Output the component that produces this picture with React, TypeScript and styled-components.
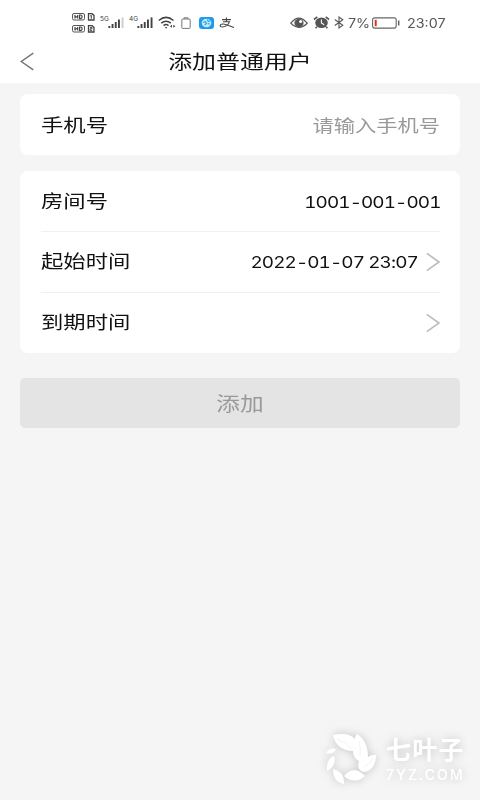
import type { ReactNode } from "react";
import styled, { createGlobalStyle } from "styled-components";

const GlobalStyle = createGlobalStyle`
  * {
    box-sizing: border-box;
  }
  body {
    margin: 0;
    background: #f5f5f5;
    font-family: Inter, "Noto Sans CJK SC", sans-serif;
    color: #111;
  }
`;

const Screen = styled.div`
  display: flex;
  flex-direction: column;
  height: 800px;
  overflow: hidden;
  background: #f5f5f5;
`;

const StatusBar = styled.div`
  display: flex;
  align-items: center;
  justify-content: space-between;
  height: 45px;
  padding: 0 34px 0 72px;
  background: #fff;
`;

const StatusGroup = styled.div`
  display: flex;
  align-items: center;
  height: 45px;
`;

const StatusIcon = styled.svg<{ $gap?: number }>`
  display: block;
  flex: none;
  margin-left: ${({ $gap }) => $gap ?? 0}px;
`;

const StatusText = styled.span<{ $gap: number; $width: number }>`
  width: ${({ $width }) => $width}px;
  margin-left: ${({ $gap }) => $gap}px;
  font-size: 13px;
  line-height: 20px;
  color: #555;
  white-space: nowrap;
  transform: scaleX(1.1);
  transform-origin: left;
`;

const Header = styled.header`
  display: grid;
  grid-template-columns: 60px 1fr 60px;
  align-items: center;
  height: 38px;
  padding-bottom: 6px;
  background: #fff;
`;

const BackButton = styled.button`
  display: flex;
  padding: 0 0 0 20px;
  border: 0;
  background: none;
`;

const Title = styled.h1`
  margin: 0;
  padding-top: 3px;
  font-size: 19px;
  font-weight: 400;
  line-height: 28px;
  text-align: center;
  transform: scaleX(1.26);
`;

const Form = styled.main`
  display: flex;
  flex-direction: column;
  padding: 11px 20px 0;
`;

const Card = styled.section`
  margin-bottom: 16px;
  padding: 0 20px 0 21px;
  border-radius: 8px;
  background: #fff;
`;

const Row = styled.div`
  display: flex;
  align-items: center;
  height: 61px;
  padding-top: 2px;

  & + & {
    padding-top: 0;
    border-top: 1px solid #f1f1f1;
  }

  &:first-child:not(:last-child) {
    height: 60px;
  }
`;

const Label = styled.span`
  font-size: 18px;
  line-height: 26px;
  transform: scaleX(1.24);
  transform-origin: left;
`;

const Value = styled.span<{ $muted?: boolean }>`
  margin-left: auto;
  font-size: ${({ $muted }) => ($muted ? 17 : 16)}px;
  font-variant-numeric: tabular-nums;
  letter-spacing: ${({ $muted }) => ($muted ? 0 : -0.75)}px;
  line-height: 26px;
  color: ${({ $muted }) => ($muted ? "#999" : "#111")};
  transform: scaleX(${({ $muted }) => ($muted ? 1.25 : 1.18)});
  transform-origin: right;
`;

const Chevron = styled.svg`
  flex: none;
  margin-left: 8px;
`;

const SubmitButton = styled.button`
  height: 50px;
  margin-top: 9px;
  padding: 0 0 1px;
  border: 0;
  border-radius: 5px;
  background: #e4e4e4;
  color: #999;
  font-family: inherit;
  font-size: 19px;
`;

const SubmitText = styled.span`
  display: inline-block;
  transform: scaleX(1.25);
`;

const Watermark = styled.div`
  display: flex;
  align-items: center;
  gap: 8px;
  width: 154px;
  height: 62px;
  margin: auto 0 10px auto;
  color: #fff;
  filter: drop-shadow(0 0 5px rgba(0, 0, 0, 0.2));
`;

const WatermarkText = styled.div`
  display: flex;
  flex-direction: column;
`;

const WatermarkName = styled.span`
  font-size: 25px;
  font-weight: 700;
  line-height: 30px;
  letter-spacing: 1.2px;
`;

const WatermarkSite = styled.span`
  font-size: 14px;
  font-weight: 500;
  line-height: 19px;
  letter-spacing: 2.1px;
`;

const SimIcon = () => (
  <StatusIcon width="23" height="20" viewBox="0 0 23 20" fill="none" stroke="#444">
    {[0, 12].map((y, i) => (
      <g key={y} transform={`translate(0 ${y})`}>
        <rect x=".5" y=".5" width="12" height="6.5" rx="1.5" strokeWidth=".9" />
        <path d="M3 2v3.6M5.7 2v3.6M3 3.8h2.7M7.6 2v3.6h1c2 0 2-3.6 0-3.6z" strokeWidth="1.2" />
        <path d="M16.5 .7h3.6L22 2.4V7h-5.5z" strokeWidth="1.3" />
        <path
          d={i === 0 ? "M18.2 3l1.1-.7v3.4" : "M18 2.6h2v1.2h-1.8v1.6h2"}
          strokeWidth="1"
        />
      </g>
    ))}
  </StatusIcon>
);

const SignalIcon = ({ label, gap, weak }: { label: string; gap: number; weak?: boolean }) => (
  <StatusIcon $gap={gap} width="25" height="14" viewBox="0 0 25 14" fill="#444">
    <text x="0" y="5" fontSize="6.5" fontFamily="Inter, sans-serif">{label}</text>
    <path d="M8.4 10h1.9v2H8.4zM11.6 8h1.9v4h-1.9zM14.8 6h1.9v6h-1.9zM18 3.6h1.9V12H18z" />
    <path d="M21.6 1.4h1.9V12h-1.9z" fill={weak ? "#ccc" : "#444"} />
  </StatusIcon>
);

const WifiIcon = () => (
  <StatusIcon $gap={4} width="18" height="13" viewBox="0 0 18 13" fill="none" stroke="#444" strokeWidth="1.5">
    <path d="M.8 4.5Q8 -1.7 15.5 4.5M3.2 7.2q4.8-4 9.7 0M5.5 9.6q2.6-2 5 0" />
    <path d="M6.8 11h2.6l-1.3 1.7z" fill="#444" stroke="none" />
    <path d="M14 8.8l-2 1.5 2 1.5zM15.3 8.8l2 1.5-2 1.5z" fill="#444" stroke="none" />
  </StatusIcon>
);

const SmallBatteryIcon = () => (
  <StatusIcon $gap={5} width="10" height="12" viewBox="0 0 10 12" fill="none" stroke="#777">
    <path d="M3 2V.8h4V2M1.8 2h6.4q1 0 1 1v7.4q0 1-1 1H1.8q-1 0-1-1V3q0-1 1-1z" />
  </StatusIcon>
);

const AppIcon = () => (
  <StatusIcon $gap={8} width="15" height="12" viewBox="0 0 15 12">
    <rect width="15" height="12" rx="3" fill="#209be8" />
    <ellipse cx="7.5" cy="6" rx="4.8" ry="4.2" fill="#c4ecff" />
    <path d="M4 5.4l2.4-.8 1 1.6-1.6 2M8.2 2.6l1 1.8 2-.4M8.6 7l2-.4" fill="none" stroke="#209be8" strokeWidth="1.1" />
  </StatusIcon>
);

const PayIcon = () => (
  <StatusIcon $gap={5} width="16" height="12" viewBox="0 0 16 12" fill="none" stroke="#444" strokeWidth="1.1">
    <path d="M3 2.6h9M7.4 .6v4M4 4.7h6.5Q9 9.4 3.7 10C.2 10.3 .3 6.8 4.4 7 7.6 7.3 11 9 15 10.4" />
  </StatusIcon>
);

const EyeIcon = () => (
  <StatusIcon width="18" height="12" viewBox="0 0 18 12" fill="none" stroke="#555" strokeWidth="1.2">
    <path d="M.8 6.2Q8.8-3.8 17.2 6.2 8.8 14.5.8 6.2z" />
    <ellipse cx="9" cy="6" rx="4" ry="3.6" fill="#555" />
    <circle cx="10.6" cy="4.4" r="1.5" fill="#fff" stroke="none" />
  </StatusIcon>
);

const AlarmIcon = () => (
  <StatusIcon $gap={5} width="17" height="13" viewBox="0 0 17 13">
    <ellipse cx="8.5" cy="6.7" rx="6.3" ry="5.2" fill="#555" />
    <path d="M1 3.5L4.3.9M16 3.5L12.7.9M3.8 10.8L2.6 12.3M13.2 10.8l1.2 1.5" stroke="#555" strokeWidth="1.6" />
    <path d="M8.4 3.5V7l2.8 1.7" fill="none" stroke="#fff" strokeWidth="1.1" />
  </StatusIcon>
);

const BluetoothIcon = () => (
  <StatusIcon $gap={4} width="10" height="13" viewBox="0 0 10 13" fill="none" stroke="#555" strokeWidth="1.1">
    <path d="M.8 3.5l8 5.8L5 12V1l3.8 2.7-8 5.8" />
  </StatusIcon>
);

const BatteryIcon = () => (
  <StatusIcon $gap={4} width="28" height="12" viewBox="0 0 28 12" fill="none" stroke="#666">
    <rect x=".6" y=".9" width="23.6" height="10.2" rx="2" strokeWidth="1.1" />
    <path d="M26.7 3.5v5" strokeWidth="1.5" />
    <path d="M3.7 2.8v6.4" stroke="#dc2f27" strokeWidth="2" />
  </StatusIcon>
);

const LeafLogo = () => (
  <svg width="52" height="52" viewBox="0 0 52 52" fill="#fff">
    <path d="M7 2c10-2 18-1 22 4 0-2 1-4 2-5 7 4 11 12 11 23 3-2 6-2 8-2 0 9-4 16-12 17-5-1-7-5-5-11-4-2-6-6-6-10C18 18 9 13 7 2z" />
    <path d="M0 20q3-6 10-4-3 6-10 4zM1 38q-1-12 7-15 3 10-7 15zM7 36q12 3 11 15Q7 49 7 36zM18 43q10-12 21 0-10 9-21 0z" />
    <path d="M11 6q9 3 15 10M33 8q2 7 1 15M38 34q6-3 9-9" fill="none" stroke="#ececec" strokeWidth=".7" />
  </svg>
);

const RightArrow = () => (
  <Chevron width="14" height="20" viewBox="0 0 14 20" fill="none" stroke="#bbb" strokeWidth="1.6">
    <path d="M.8 1.3L13 10 .8 18.7" />
  </Chevron>
);

interface FieldProps {
  label: string;
  children?: ReactNode;
  muted?: boolean;
  arrow?: boolean;
}

const Field = ({ label, children, muted, arrow }: FieldProps) => (
  <Row>
    <Label>{label}</Label>
    <Value $muted={muted}>{children}</Value>
    {arrow && <RightArrow />}
  </Row>
);

const App = () => {
  return (
    <Screen>
      <GlobalStyle />
      <StatusBar>
        <StatusGroup>
          <SimIcon />
          <SignalIcon label="5G" gap={5} weak />
          <SignalIcon label="4G" gap={4} />
          <WifiIcon />
          <SmallBatteryIcon />
          <AppIcon />
          <PayIcon />
        </StatusGroup>
        <StatusGroup>
          <EyeIcon />
          <AlarmIcon />
          <BluetoothIcon />
          <StatusText $gap={4} $width={20}>7%</StatusText>
          <BatteryIcon />
          <StatusText $gap={7} $width={39}>23:07</StatusText>
        </StatusGroup>
      </StatusBar>
      <Header>
        <BackButton aria-label="返回">
          <svg width="14" height="19" viewBox="0 0 14 19" fill="none" stroke="#777" strokeWidth="1.5">
            <path d="M13.3 1.2L1.3 9.5l12 8.3" />
          </svg>
        </BackButton>
        <Title>添加普通用户</Title>
      </Header>
      <Form>
        <Card>
          <Field label="手机号" muted>请输入手机号</Field>
        </Card>
        <Card>
          <Field label="房间号">1001-001-001</Field>
          <Field label="起始时间" arrow>2022-01-07 23:07</Field>
          <Field label="到期时间" arrow />
        </Card>
        <SubmitButton disabled>
          <SubmitText>添加</SubmitText>
        </SubmitButton>
      </Form>
      <Watermark>
        <LeafLogo />
        <WatermarkText>
          <WatermarkName>七叶子</WatermarkName>
          <WatermarkSite>7YZ.COM</WatermarkSite>
        </WatermarkText>
      </Watermark>
    </Screen>
  );
};

export default App;
